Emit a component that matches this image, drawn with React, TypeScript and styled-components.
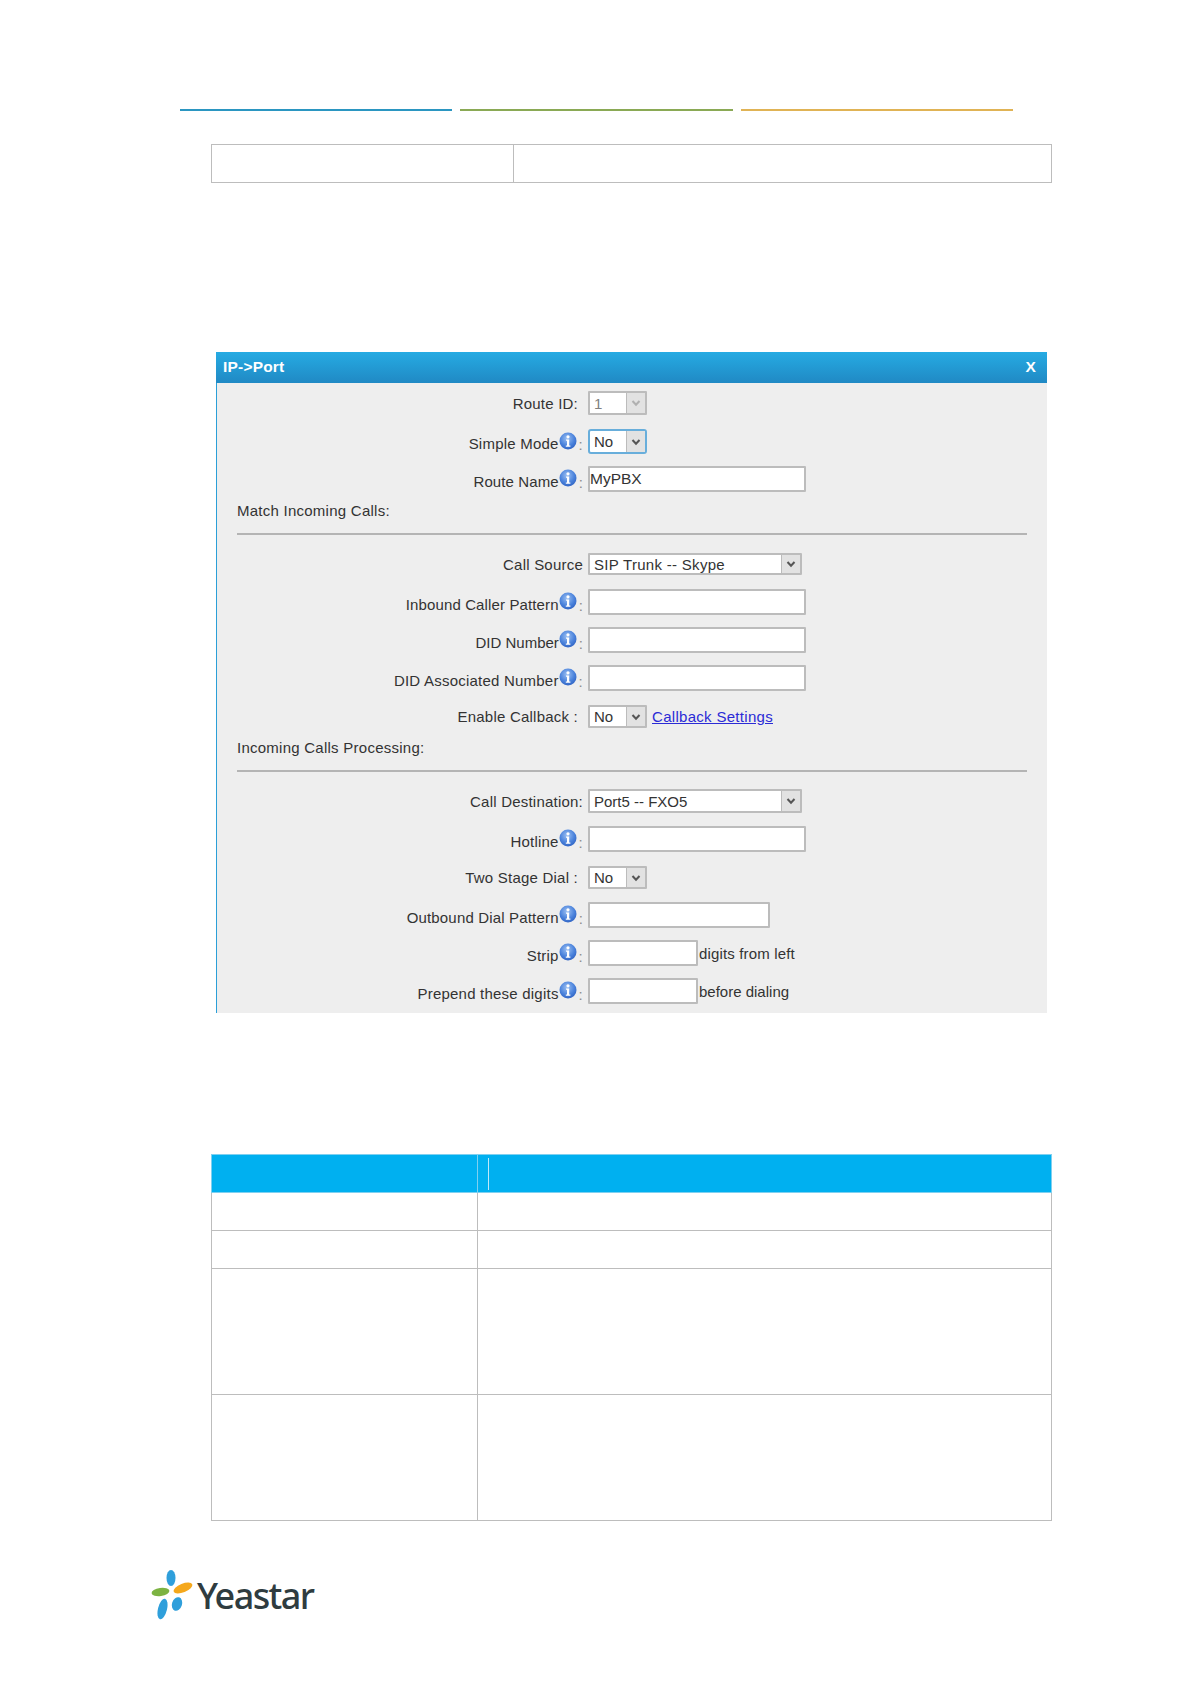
import React, { useId } from "react";
import styled, { createGlobalStyle } from "styled-components";

const GlobalStyle = createGlobalStyle`
  html, body {
    margin: 0;
    padding: 0;
    background: #ffffff;
    font-family: "Liberation Sans", Arial, sans-serif;
  }
`;

const Page = styled.div`
  width: 1191px;
  height: 1684px;
  overflow: hidden;
  padding-top: 109px;
  box-sizing: border-box;
`;

const TopLines = styled.div`
  display: flex;
  gap: 8px;
  margin-left: 179.5px;
`;

const TopLine = styled.div<{ $color: string }>`
  width: 272.5px;
  height: 2px;
  background: ${({ $color }) => $color};
`;

const Table = styled.table<{ $top: number; $first: number }>`
  border-collapse: collapse;
  table-layout: fixed;
  width: 841px;
  margin: ${({ $top }) => $top}px 0 0 211px;

  td:first-child,
  th:first-child {
    width: ${({ $first }) => $first}px;
  }
`;

const Cell = styled.td`
  border: 1px solid #bdbdbd;
  padding: 0;
`;

const HeadCell = styled.th`
  border: 1px solid #7fd0f0;
  background: #00b0f0;
  padding: 2px 0 2px 10px;
  height: 33px;
  box-sizing: content-box;
`;

const HeadTick = styled.div`
  width: 1px;
  height: 32px;
  background: #bfe9fa;
`;

const TableRow = styled.tr<{ $h: number }>`
  height: ${({ $h }) => $h}px;
`;

const Dialog = styled.section`
  width: 831px;
  margin: 169px 0 0 216px;
  background: #eeeeee;
  box-sizing: border-box;
  border-left: 1px solid #2a9fd8;
  padding-bottom: 9px;
`;

const DialogBar = styled.header`
  display: flex;
  justify-content: space-between;
  align-items: center;
  height: 31px;
  box-sizing: border-box;
  margin-left: -1px;
  padding: 0 11px 2px 7px;
  background: linear-gradient(#26abe3, #2089c4);
  color: #ffffff;
  font-weight: bold;
  font-size: 15.5px;
  letter-spacing: 0.2px;
`;

const Row = styled.div<{ $gap: number }>`
  display: flex;
  align-items: center;
  margin-top: ${({ $gap }) => $gap}px;
`;

const Label = styled.div<{ $inset?: number; $track?: number }>`
  display: flex;
  align-items: center;
  justify-content: flex-end;
  width: 371px;
  box-sizing: border-box;
  padding-right: ${({ $inset }) => $inset ?? 5}px;
  font-size: 15px;
  letter-spacing: ${({ $track }) => $track ?? 0.22}px;
  color: #333333;
  white-space: pre;
`;

const LabelText = styled.span<{ $info?: boolean }>`
  padding-top: ${({ $info }) => ($info ? 4 : 0)}px;
`;

const Colon = styled.span`
  color: #8c8c8c;
  padding: 6px 0 0 2px;
`;

const InfoSvg = styled.svg`
  display: block;
  flex: none;
  margin-bottom: 2px;
`;

const Input = styled.input<{ $w: number; $h: number }>`
  display: block;
  box-sizing: border-box;
  width: ${({ $w }) => $w}px;
  height: ${({ $h }) => $h}px;
  margin: 0;
  padding: 0;
  border: 2px solid #bcbcbc;
  border-radius: 1px;
  outline: none;
  background: #ffffff;
  font-family: "Liberation Sans", Arial, sans-serif;
  font-size: 15.5px;
  color: #333333;
`;

const Select = styled.div<{ $w: number; $h: number; $focus?: boolean }>`
  display: flex;
  box-sizing: border-box;
  width: ${({ $w }) => $w}px;
  height: ${({ $h }) => $h}px;
  border: 2px solid ${({ $focus }) => ($focus ? "#68aedb" : "#bcbcbc")};
  border-radius: ${({ $focus }) => ($focus ? 3 : 1)}px;
  background: #ffffff;
`;

const SelectValue = styled.div<{ $muted?: boolean; $track?: number }>`
  flex: 1;
  display: flex;
  align-items: center;
  padding-left: 4px;
  font-size: 15px;
  letter-spacing: ${({ $track }) => $track ?? 0}px;
  color: ${({ $muted }) => ($muted ? "#808080" : "#333333")};
  white-space: pre;
`;

const SelectArrow = styled.div<{ $muted?: boolean }>`
  flex: none;
  width: 18px;
  display: flex;
  align-items: center;
  justify-content: center;
  background: #e2e2e2;
  border-left: 1px solid #bcbcbc;
  color: ${({ $muted }) => ($muted ? "#b0b0b0" : "#555555")};
`;

const FieldNote = styled.span<{ $track?: number }>`
  margin-left: 1px;
  font-size: 15px;
  letter-spacing: ${({ $track }) => $track ?? 0}px;
  color: #333333;
`;

const SettingsLink = styled.a`
  margin-left: 5px;
  font-size: 15px;
  letter-spacing: 0.3px;
  color: #2b2bd6;
  text-decoration: underline;
`;

const SectionTitle = styled.div<{ $gap: number }>`
  margin: ${({ $gap }) => $gap}px 0 0 20px;
  height: 18px;
  line-height: 18px;
  font-size: 15px;
  letter-spacing: 0.25px;
  color: #333333;
`;

const Divider = styled.hr<{ $gap: number }>`
  width: 790px;
  height: 2px;
  margin: ${({ $gap }) => $gap}px 0 0 20px;
  border: 0;
  background: #b4b4b4;
`;

const Footer = styled.footer`
  display: flex;
  align-items: center;
  gap: 2px;
  margin: 46px 0 0 150px;
`;

const LogoWord = styled.span`
  padding-top: 4px;
  font-family: "Noto Sans", sans-serif;
  font-size: 36px;
  font-weight: 500;
  line-height: 50px;
  letter-spacing: -1.6px;
  color: #2f3c40;
`;

const Info = () => {
  const id = useId();
  return (
    <InfoSvg width="18" height="18" viewBox="0 0 18 18">
      <defs>
        <radialGradient id={id} cx="45%" cy="35%" r="70%">
          <stop offset="0%" stopColor="#9cc0f2" />
          <stop offset="60%" stopColor="#4b83dc" />
          <stop offset="100%" stopColor="#2c5fc0" />
        </radialGradient>
      </defs>
      <circle cx="9" cy="9" r="8.5" fill={`url(#${id})`} />
      <circle cx="9" cy="4.8" r="1.6" fill="#ffffff" />
      <path d="M7 7.4h3.2v6H11.4v1.3H6.8v-1.3H8v-4.7H7z" fill="#ffffff" />
    </InfoSvg>
  );
};

const Chevron = () => (
  <svg width="10" height="8" viewBox="0 0 10 8">
    <path d="M1.5 2 5 5.8 8.5 2" fill="none" stroke="currentColor" strokeWidth="2" />
  </svg>
);

interface DropdownProps {
  value: string;
  wide?: boolean;
  h?: number;
  focus?: boolean;
  muted?: boolean;
  track?: number;
}

const Dropdown = ({ value, wide, h = 23, focus, muted, track }: DropdownProps) => (
  <Select $w={wide ? 214 : 59} $h={h} $focus={focus}>
    <SelectValue $muted={muted} $track={track}>
      {value}
    </SelectValue>
    <SelectArrow $muted={muted}>
      <Chevron />
    </SelectArrow>
  </Select>
);

const InfoLabel = ({ text, track }: { text: string; track?: number }) => (
  <Label $inset={5} $track={track}>
    <LabelText $info>{text}</LabelText>
    <Info />
    <Colon>:</Colon>
  </Label>
);

const YeastarMark = () => (
  <svg width="45" height="52" viewBox="0 0 45 52">
    <ellipse cx="21" cy="10" rx="4.5" ry="8" fill="#2f9fdb" />
    <ellipse cx="10.5" cy="24" rx="9" ry="4" fill="#7cb342" transform="rotate(-8 10.5 24)" />
    <ellipse cx="33" cy="20" rx="10" ry="4.3" fill="#f5a81c" transform="rotate(-22 33 20)" />
    <ellipse cx="12.5" cy="41" rx="4.5" ry="10.5" fill="#2f9fdb" transform="rotate(14 12.5 41)" />
    <ellipse cx="27" cy="36" rx="5" ry="7" fill="#2f9fdb" transform="rotate(18 27 36)" />
  </svg>
);

export default function App() {
  return (
    <>
      <GlobalStyle />
      <Page>
        <TopLines>
          <TopLine $color="#2b96c1" />
          <TopLine $color="#8aa955" />
          <TopLine $color="#e0b355" />
        </TopLines>

        <Table $top={33} $first={301}>
          <tbody>
            <TableRow $h={38}>
              <Cell />
              <Cell />
            </TableRow>
          </tbody>
        </Table>

        <Dialog>
          <DialogBar>
            <span>IP-&gt;Port</span>
            <span>X</span>
          </DialogBar>

          <Row $gap={8}>
            <Label $inset={10}>Route ID:</Label>
            <Dropdown value="1" h={24} muted />
          </Row>
          <Row $gap={14}>
            <InfoLabel text="Simple Mode" />
            <Dropdown value="No" h={25} focus />
          </Row>
          <Row $gap={12}>
            <InfoLabel text="Route Name" track={0.1} />
            <Input $w={218} $h={26} value="MyPBX" readOnly />
          </Row>

          <SectionTitle $gap={10}>Match Incoming Calls:</SectionTitle>
          <Divider $gap={13} />

          <Row $gap={18}>
            <Label>Call Source</Label>
            <Dropdown value="SIP Trunk -- Skype" wide h={22} track={0.3} />
          </Row>
          <Row $gap={14}>
            <InfoLabel text="Inbound Caller Pattern" track={0.13} />
            <Input $w={218} $h={26} readOnly />
          </Row>
          <Row $gap={12}>
            <InfoLabel text="DID Number" track={0} />
            <Input $w={218} $h={26} readOnly />
          </Row>
          <Row $gap={12}>
            <InfoLabel text="DID Associated Number" />
            <Input $w={218} $h={26} readOnly />
          </Row>
          <Row $gap={14}>
            <Label $inset={10}>Enable Callback :</Label>
            <Dropdown value="No" />
            <SettingsLink href="#">Callback Settings</SettingsLink>
          </Row>

          <SectionTitle $gap={11}>Incoming Calls Processing:</SectionTitle>
          <Divider $gap={13} />

          <Row $gap={17}>
            <Label>Call Destination:</Label>
            <Dropdown value="Port5 -- FXO5" wide h={24} />
          </Row>
          <Row $gap={13}>
            <InfoLabel text="Hotline" />
            <Input $w={218} $h={26} readOnly />
          </Row>
          <Row $gap={14}>
            <Label $inset={10}>Two Stage Dial :</Label>
            <Dropdown value="No" />
          </Row>
          <Row $gap={13}>
            <InfoLabel text="Outbound Dial Pattern" track={0.17} />
            <Input $w={182} $h={26} readOnly />
          </Row>
          <Row $gap={12}>
            <InfoLabel text="Strip" />
            <Input $w={110} $h={26} readOnly />
            <FieldNote $track={0.15}>digits from left</FieldNote>
          </Row>
          <Row $gap={12}>
            <InfoLabel text="Prepend these digits" />
            <Input $w={110} $h={26} readOnly />
            <FieldNote>before dialing</FieldNote>
          </Row>
        </Dialog>

        <Table $top={141} $first={255}>
          <tbody>
            <TableRow $h={38}>
              <HeadCell />
              <HeadCell>
                <HeadTick />
              </HeadCell>
            </TableRow>
            <TableRow $h={38}>
              <Cell />
              <Cell />
            </TableRow>
            <TableRow $h={38}>
              <Cell />
              <Cell />
            </TableRow>
            <TableRow $h={126}>
              <Cell />
              <Cell />
            </TableRow>
            <TableRow $h={126}>
              <Cell />
              <Cell />
            </TableRow>
          </tbody>
        </Table>

        <Footer>
          <YeastarMark />
          <LogoWord>Yeastar</LogoWord>
        </Footer>
      </Page>
    </>
  );
}
